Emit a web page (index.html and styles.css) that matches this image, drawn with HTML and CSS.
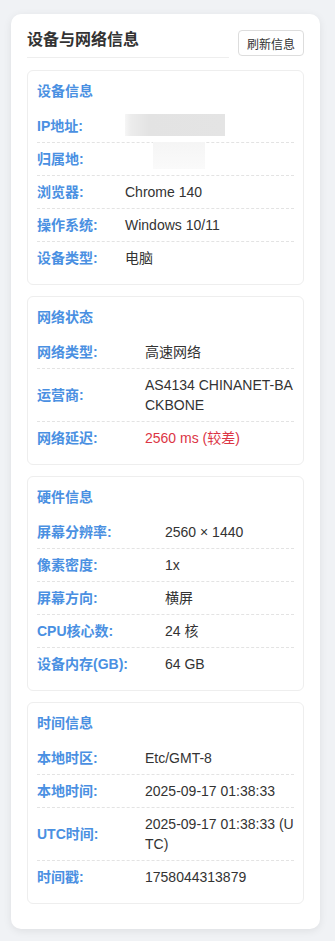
FILE: index.html
```html
<!DOCTYPE html>
<html lang="zh-CN">
<head>
<meta charset="utf-8">
<title>设备与网络信息</title>
<link rel="stylesheet" href="styles.css">
</head>
<body>
<div class="panel">
  <div class="panel-head">
    <h2 class="panel-title">设备与网络信息</h2>
    <button class="refresh-btn">刷新信息</button>
  </div>

  <section class="card card-a">
    <h3 class="card-title">设备信息</h3>
    <div class="row"><span class="label">IP地址:</span><span class="value"><span class="mask mask-ip"></span></span></div>
    <div class="row"><span class="label">归属地:</span><span class="value"><span class="mask mask-loc"></span></span></div>
    <div class="row"><span class="label">浏览器:</span><span class="value">Chrome 140</span></div>
    <div class="row"><span class="label">操作系统:</span><span class="value">Windows 10/11</span></div>
    <div class="row"><span class="label">设备类型:</span><span class="value">电脑</span></div>
  </section>

  <section class="card card-b">
    <h3 class="card-title">网络状态</h3>
    <div class="row"><span class="label">网络类型:</span><span class="value">高速网络</span></div>
    <div class="row"><span class="label">运营商:</span><span class="value">AS4134 CHINANET-BACKBONE</span></div>
    <div class="row"><span class="label">网络延迟:</span><span class="value bad">2560 ms (较差)</span></div>
  </section>

  <section class="card card-c">
    <h3 class="card-title">硬件信息</h3>
    <div class="row"><span class="label">屏幕分辨率:</span><span class="value">2560 × 1440</span></div>
    <div class="row"><span class="label">像素密度:</span><span class="value">1x</span></div>
    <div class="row"><span class="label">屏幕方向:</span><span class="value">横屏</span></div>
    <div class="row"><span class="label">CPU核心数:</span><span class="value">24 核</span></div>
    <div class="row"><span class="label">设备内存(GB):</span><span class="value">64 GB</span></div>
  </section>

  <section class="card card-b">
    <h3 class="card-title">时间信息</h3>
    <div class="row"><span class="label">本地时区:</span><span class="value">Etc/GMT-8</span></div>
    <div class="row"><span class="label">本地时间:</span><span class="value">2025-09-17 01:38:33</span></div>
    <div class="row"><span class="label">UTC时间:</span><span class="value">2025-09-17 01:38:33 (UTC)</span></div>
    <div class="row"><span class="label">时间戳:</span><span class="value">1758044313879</span></div>
  </section>
</div>
</body>
</html>
```
FILE: styles.css
```css
* { box-sizing: border-box; }

body {
  margin: 0;
  padding: 14px 15px 12px 11px;
  background: #f0f2f5;
  font-family: "Liberation Sans", Arial, "Noto Sans CJK SC", sans-serif;
  color: #333;
}

.panel {
  background: #fff;
  border-radius: 10px;
  box-shadow: 0 2px 8px rgba(0, 0, 0, 0.08);
  padding: 16px 16px 14px 16px;
}

.panel-head {
  display: flex;
  align-items: flex-start;
  gap: 9px;
  margin-bottom: 12px;
}

.panel-title {
  flex: 1;
  margin: 0;
  font-size: 16px;
  line-height: 18px;
  font-weight: 600;
  color: #333;
  padding: 1px 0 8px;
  border-bottom: 1px solid #eee;
}

.refresh-btn {
  height: 26px;
  padding: 0 8px;
  font-family: inherit;
  font-size: 12px;
  color: #333;
  background: #fff;
  border: 1px solid #ddd;
  border-radius: 4px;
}

.card {
  border: 1px solid #eee;
  border-radius: 6px;
  padding: 10px 9px 10px 9px;
  margin-bottom: 11px;
}

.card-title {
  margin: 0 0 9px;
  font-size: 14px;
  line-height: 20px;
  font-weight: 700;
  color: #4a90e2;
}

.row {
  display: grid;
  grid-template-columns: 88px 1fr;
  align-items: center;
  padding: 6px 0;
  border-bottom: 1px dashed #e3e3e3;
  font-size: 14px;
  line-height: 20px;
}

.row:last-child { border-bottom: none; }

.card-b .row { grid-template-columns: 108px 1fr; }
.card-c .row { grid-template-columns: 128px 1fr; }

.label {
  font-weight: 700;
  color: #4a90e2;
}

.value {
  color: #333;
  word-break: break-all;
}

.value.bad { color: #dc3545; }

.mask {
  display: block;
  height: 22px;
}

.mask-ip {
  width: 100px;
  margin-top: -2px;
  background: linear-gradient(90deg, #f6f6f6 0, #ececec 6px, #e3e3e3 24px, #e4e4e4 100%);
}

.mask-loc {
  width: 52px;
  margin-left: 28px;
  margin-top: -7px;
  height: 27px;
  background: linear-gradient(180deg, #f5f5f5 0, #fafafa 100%);
}
```
